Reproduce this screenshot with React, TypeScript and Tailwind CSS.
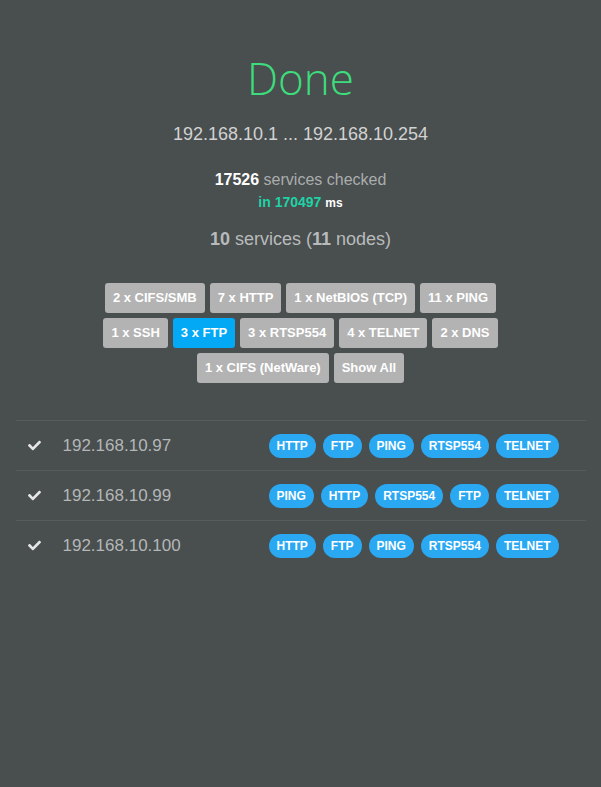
import React from "react";
import { FaCheck } from "react-icons/fa";

const filters: { label: string; active?: boolean }[][] = [
  [{ label: "2 x CIFS/SMB" }, { label: "7 x HTTP" }, { label: "1 x NetBIOS (TCP)" }, { label: "11 x PING" }],
  [{ label: "1 x SSH" }, { label: "3 x FTP", active: true }, { label: "3 x RTSP554" }, { label: "4 x TELNET" }, { label: "2 x DNS" }],
  [{ label: "1 x CIFS (NetWare)" }, { label: "Show All" }],
];

const hosts = [
  { ip: "192.168.10.97", services: ["HTTP", "FTP", "PING", "RTSP554", "TELNET"] },
  { ip: "192.168.10.99", services: ["PING", "HTTP", "RTSP554", "FTP", "TELNET"] },
  { ip: "192.168.10.100", services: ["HTTP", "FTP", "PING", "RTSP554", "TELNET"] },
];

export default function App() {
  return (
    <div
      className="w-[601px] h-[787px] bg-[#494e4f] overflow-hidden flex flex-col items-center"
      style={{ fontFamily: '"Liberation Sans", Arial, sans-serif' }}
    >
      <div
        className="mt-[50px] text-[44px] leading-[56px] font-light text-[#3ddc7c]"
        style={{ fontFamily: '"Open Sans", sans-serif' }}
      >
        Done
      </div>
      <div className="mt-[17px] text-[18px] leading-[22px] text-[#d2d2d2]">192.168.10.1 ... 192.168.10.254</div>
      <div className="mt-[25px] text-[16px] leading-[20px] text-[#a9adad]">
        <span className="font-bold text-white">17526</span> services checked
      </div>
      <div className="mt-[3px] text-[14px] leading-[18px] font-bold text-[#1fd2a6]">
        in 170497 <span className="text-[12px] text-white">ms</span>
      </div>
      <div className="mt-[16px] text-[18px] leading-[22px] text-[#b8bbbb]">
        <span className="font-bold">10</span> services (<span className="font-bold">11</span> nodes)
      </div>
      <div className="mt-[33px] flex flex-col items-center gap-[5px]">
        {filters.map((row, i) => (
          <div key={i} className="flex gap-[5px]">
            {row.map((f) => (
              <div
                key={f.label}
                className={`h-[30px] px-[8px] rounded-[3px] flex items-center text-[13px] font-bold text-white ${
                  f.active ? "bg-[#03a9f4]" : "bg-[#b3b3b3]"
                }`}
              >
                {f.label}
              </div>
            ))}
          </div>
        ))}
      </div>
      <div className="mt-[37px] w-[570px] flex flex-col">
        {hosts.map((h) => (
          <div key={h.ip} className="h-[50px] border-t border-[#565c5d] flex items-center">
            <div className="w-[47px] pl-[12px] flex items-center text-[#e6e6e6]">
              <FaCheck size={13} />
            </div>
            <div className="w-[206px] text-[17px] text-[#b4b7b7]">{h.ip}</div>
            <div className="flex gap-[7px]">
              {h.services.map((s) => (
                <div
                  key={s}
                  className="h-[24px] px-[8px] rounded-full bg-[#2aa8f2] text-white text-[12px] font-bold flex items-center"
                >
                  {s}
                </div>
              ))}
            </div>
          </div>
        ))}
      </div>
    </div>
  );
}
